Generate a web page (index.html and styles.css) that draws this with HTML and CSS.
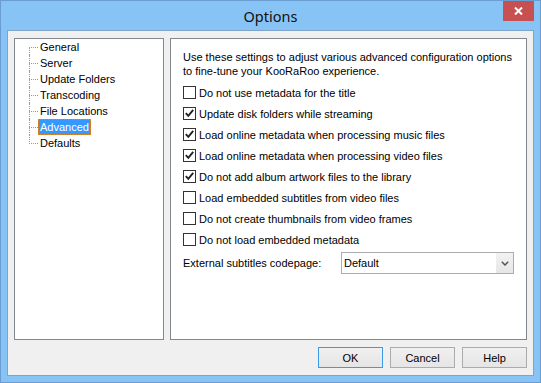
FILE: index.html
```html
<!DOCTYPE html>
<html lang="en">
<head>
  <meta charset="UTF-8">
  <title>Options</title>
  <link rel="stylesheet" href="styles.css">
</head>
<body>
  <div class="window">
    <div class="titlebar">
      <span class="title">Options</span>
      <button class="close-btn" aria-label="Close">
        <svg width="9" height="8" viewBox="0 0 9 8"><path d="M1 0.5 L8 7.5 M8 0.5 L1 7.5" stroke="#fff" stroke-width="2" fill="none"/></svg>
      </button>
    </div>

    <div class="client">
      <div class="panels">
        <div class="tree-panel">
          <ul class="tree">
            <li><span class="node">General</span></li>
            <li><span class="node">Server</span></li>
            <li><span class="node">Update Folders</span></li>
            <li><span class="node">Transcoding</span></li>
            <li><span class="node">File Locations</span></li>
            <li><span class="node selected">Advanced</span></li>
            <li><span class="node">Defaults</span></li>
          </ul>
        </div>

        <div class="settings-panel">
          <p class="intro">Use these settings to adjust various advanced configuration options<br>to fine-tune your KooRaRoo experience.</p>

          <ul class="options">
            <li class="option"><span class="checkbox"></span>Do not use metadata for the title</li>
            <li class="option"><span class="checkbox"><svg width="11" height="11" viewBox="0 0 11 11"><path d="M1.8 5.2 L4.3 7.8 L9.2 1.8" stroke="#222" stroke-width="1.9" fill="none"/></svg></span>Update disk folders while streaming</li>
            <li class="option"><span class="checkbox"><svg width="11" height="11" viewBox="0 0 11 11"><path d="M1.8 5.2 L4.3 7.8 L9.2 1.8" stroke="#222" stroke-width="1.9" fill="none"/></svg></span>Load online metadata when processing music files</li>
            <li class="option"><span class="checkbox"><svg width="11" height="11" viewBox="0 0 11 11"><path d="M1.8 5.2 L4.3 7.8 L9.2 1.8" stroke="#222" stroke-width="1.9" fill="none"/></svg></span>Load online metadata when processing video files</li>
            <li class="option"><span class="checkbox"><svg width="11" height="11" viewBox="0 0 11 11"><path d="M1.8 5.2 L4.3 7.8 L9.2 1.8" stroke="#222" stroke-width="1.9" fill="none"/></svg></span>Do not add album artwork files to the library</li>
            <li class="option"><span class="checkbox"></span>Load embedded subtitles from video files</li>
            <li class="option"><span class="checkbox"></span>Do not create thumbnails from video frames</li>
            <li class="option"><span class="checkbox"></span>Do not load embedded metadata</li>
          </ul>

          <div class="codepage-row">
            <span>External subtitles codepage:</span>
            <div class="select">
              <span class="select-value">Default</span>
              <span class="select-arrow">
                <svg width="8" height="5" viewBox="0 0 8 5"><path d="M0.8 0.8 L4 4 L7.2 0.8" stroke="#555" stroke-width="1.5" fill="none"/></svg>
              </span>
            </div>
          </div>
        </div>
      </div>

      <div class="buttons">
        <button class="btn btn-default">OK</button>
        <button class="btn">Cancel</button>
        <button class="btn">Help</button>
      </div>
    </div>
  </div>
</body>
</html>
```

FILE: styles.css
```css
* {
  margin: 0;
  padding: 0;
  box-sizing: border-box;
}

body {
  font-family: "Liberation Sans", Arial, sans-serif;
  font-size: 11px;
  color: #000;
  background: #88c3f5;
}

.window {
  width: 541px;
  height: 383px;
  background: #88c3f5;
  border: 1px solid #6a9ed2;
  display: flex;
  flex-direction: column;
}

/* title bar */
.titlebar {
  position: relative;
  height: 29px;
  flex-shrink: 0;
  display: flex;
  align-items: center;
  justify-content: center;
}

.title {
  font-family: "Noto Sans", "Open Sans", sans-serif;
  font-size: 14.5px;
  color: #111;
  line-height: 29px;
  padding-top: 1px;
}

.close-btn {
  position: absolute;
  top: 0;
  right: 6px;
  width: 31px;
  height: 20px;
  border: none;
  background: #c75050;
  display: flex;
  align-items: center;
  justify-content: center;
}

/* client area */
.client {
  flex: 1;
  margin: 0 6px 6px;
  background: #f0f0f0;
  border: 1px solid #7fa3c9;
  padding: 7px 6px 7px;
  display: flex;
  flex-direction: column;
}

.panels {
  display: flex;
  gap: 6px;
  height: 302px;
}

.tree-panel {
  width: 150px;
  background: #fff;
  border: 1px solid #828790;
}

.tree {
  list-style: none;
}

.tree li {
  position: relative;
  height: 16px;
  padding-left: 23px;
}

/* tree connector lines */
.tree li::before {
  content: "";
  position: absolute;
  left: 14px;
  top: 8px;
  width: 9px;
  border-top: 1px dotted #999;
}

.tree li::after {
  content: "";
  position: absolute;
  left: 14px;
  top: 0;
  height: 16px;
  border-left: 1px dotted #999;
}

.tree li:first-child::after {
  top: 8px;
  height: 8px;
}

.tree li:last-child::after {
  height: 9px;
}

.node {
  display: inline-block;
  height: 16px;
  line-height: 14px;
  padding: 0 1px;
  border: 1px solid transparent;
}

.node.selected {
  background: #3399ff;
  color: #fff;
  border: 1px dotted #d9892b;
}

.settings-panel {
  flex: 1;
  background: #fff;
  border: 1px solid #828790;
  padding: 11px 12px 0;
}

.intro {
  line-height: 14px;
  margin-bottom: 4px;
}

.options {
  list-style: none;
}

.option {
  height: 21px;
  display: flex;
  align-items: center;
}

.checkbox {
  width: 13px;
  height: 13px;
  border: 1px solid #333;
  background: #fff;
  margin-right: 3px;
  display: flex;
  align-items: center;
  justify-content: center;
}

.codepage-row {
  margin-top: 2px;
  height: 22px;
  display: flex;
  align-items: center;
  justify-content: space-between;
}

.select {
  width: 173px;
  height: 22px;
  border: 1px solid #acacac;
  background: #fff;
  display: flex;
  align-items: center;
}

.select-value {
  flex: 1;
  padding-left: 2px;
}

.select-arrow {
  width: 17px;
  height: 100%;
  background: linear-gradient(#f2f2f2, #e6e6e6);
  display: flex;
  align-items: center;
  justify-content: center;
}

/* dialog buttons */
.buttons {
  margin-top: 7px;
  display: flex;
  justify-content: flex-end;
  gap: 7px;
}

.btn {
  width: 65px;
  height: 21px;
  font-family: "Liberation Sans", Arial, sans-serif;
  font-size: 11px;
  color: #000;
  background: linear-gradient(#f0f0f0, #e5e5e5);
  border: 1px solid #acacac;
}

.btn-default {
  border-color: #3c9be8;
}
```
